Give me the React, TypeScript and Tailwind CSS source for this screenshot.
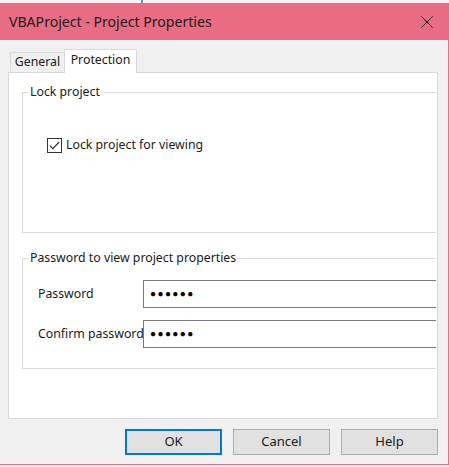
const Dots = () => (
  <span className="text-[10px] tracking-[1.4px] text-black leading-none">●●●●●●</span>
);

const PasswordRow = ({ label, first }: { label: string; first?: boolean }) => (
  <div className={`flex items-center pl-[15px] ${first ? "" : "mt-[12px]"}`}>
    <span className="w-[105px] whitespace-nowrap">{label}</span>
    <div className="flex-1 h-[28px] bg-white border-y border-l border-[#7a7a7a] flex items-center pl-[6px] pb-[3px]">
      <Dots />
    </div>
  </div>
);

const DialogButton = ({ label, focused }: { label: string; focused?: boolean }) => (
  <button
    className={`w-[97px] h-[26px] bg-[#e1e1e1] text-[13px] text-[#1a1a1a] ${
      focused ? "border-2 border-[#0078d7]" : "border border-[#adadad]"
    }`}
  >
    {label}
  </button>
);

const App = () => {
  return (
    <div className="w-[449px] h-[467px] bg-[#f0f0f0] overflow-hidden flex flex-col font-['Noto_Sans',sans-serif] text-[12.3px] text-[#1a1a1a]">
      {/* MENU STRIP (clipped) */}
      <div className="h-[3px] overflow-hidden bg-[#f4f4f4]">
        <div className="flex -mt-[13px] leading-[16px] text-[13px] text-[#444]">
          <span className="w-[54px] -ml-[4px]">d-Ins</span>
          <span className="w-[70px]">Window</span>
          <span>Help</span>
        </div>
      </div>

      {/* TITLE BAR */}
      <div className="h-[37px] bg-[#e96c85] flex items-center justify-between pl-[9px] pr-[16px]">
        <span className="text-[14.1px] text-[#1b1b1b]">VBAProject - Project Properties</span>
        <svg width="12" height="12" viewBox="0 0 12 12" className="mt-[1px]">
          <path d="M0.5 0.5 L11.5 11.5 M11.5 0.5 L0.5 11.5" stroke="#111" strokeWidth="1" />
        </svg>
      </div>

      {/* BODY */}
      <div className="h-[425px] border-r border-b border-[#e47089] flex flex-col pl-[8px] pr-[10px] pt-[9px]">
        {/* TABS */}
        <div className="flex items-end pl-[2px] h-[24px] -mb-px">
          <div className="w-[55px] h-[20px] mb-px border-t border-l border-r border-[#d9d9d9] bg-[#f0f0f0] flex items-center justify-center">
            General
          </div>
          <div className="relative -ml-px w-[73px] h-[24px] border-t border-l border-r border-[#d9d9d9] bg-white flex items-center justify-center pb-[3px]">
            Protection
          </div>
        </div>

        {/* PANEL */}
        <div className="h-[347px] border border-[#d9d9d9] bg-white pt-[10px] pl-[13px] pr-px">
          <fieldset className="h-[150px] border-t border-l border-b border-[#dcdcdc]">
            <legend className="ml-[6px] px-[1px] leading-[18px]">Lock project</legend>
            <div className="pt-[35px] pl-[24px] flex items-center">
              <div className="w-[15px] h-[15px] border border-[#333] bg-white flex items-center justify-center">
                <svg width="11" height="9" viewBox="0 0 11 9">
                  <path d="M0.8 4.6 L3.8 7.6 L10.2 1" fill="none" stroke="#333" strokeWidth="1.2" />
                </svg>
              </div>
              <span className="ml-[4px]">Lock project for viewing</span>
            </div>
          </fieldset>

          <fieldset className="mt-[16px] h-[120px] border-t border-l border-b border-[#dcdcdc]">
            <legend className="ml-[6px] px-[1px] leading-[18px]">Password to view project properties</legend>
            <div className="pt-[13px]">
              <PasswordRow label="Password" first />
              <PasswordRow label="Confirm password" />
            </div>
          </fieldset>
        </div>

        {/* BUTTONS */}
        <div className="mt-[10px] flex justify-end gap-[11px]">
          <DialogButton label="OK" focused />
          <DialogButton label="Cancel" />
          <DialogButton label="Help" />
        </div>
      </div>
    </div>
  );
};

export default App;
